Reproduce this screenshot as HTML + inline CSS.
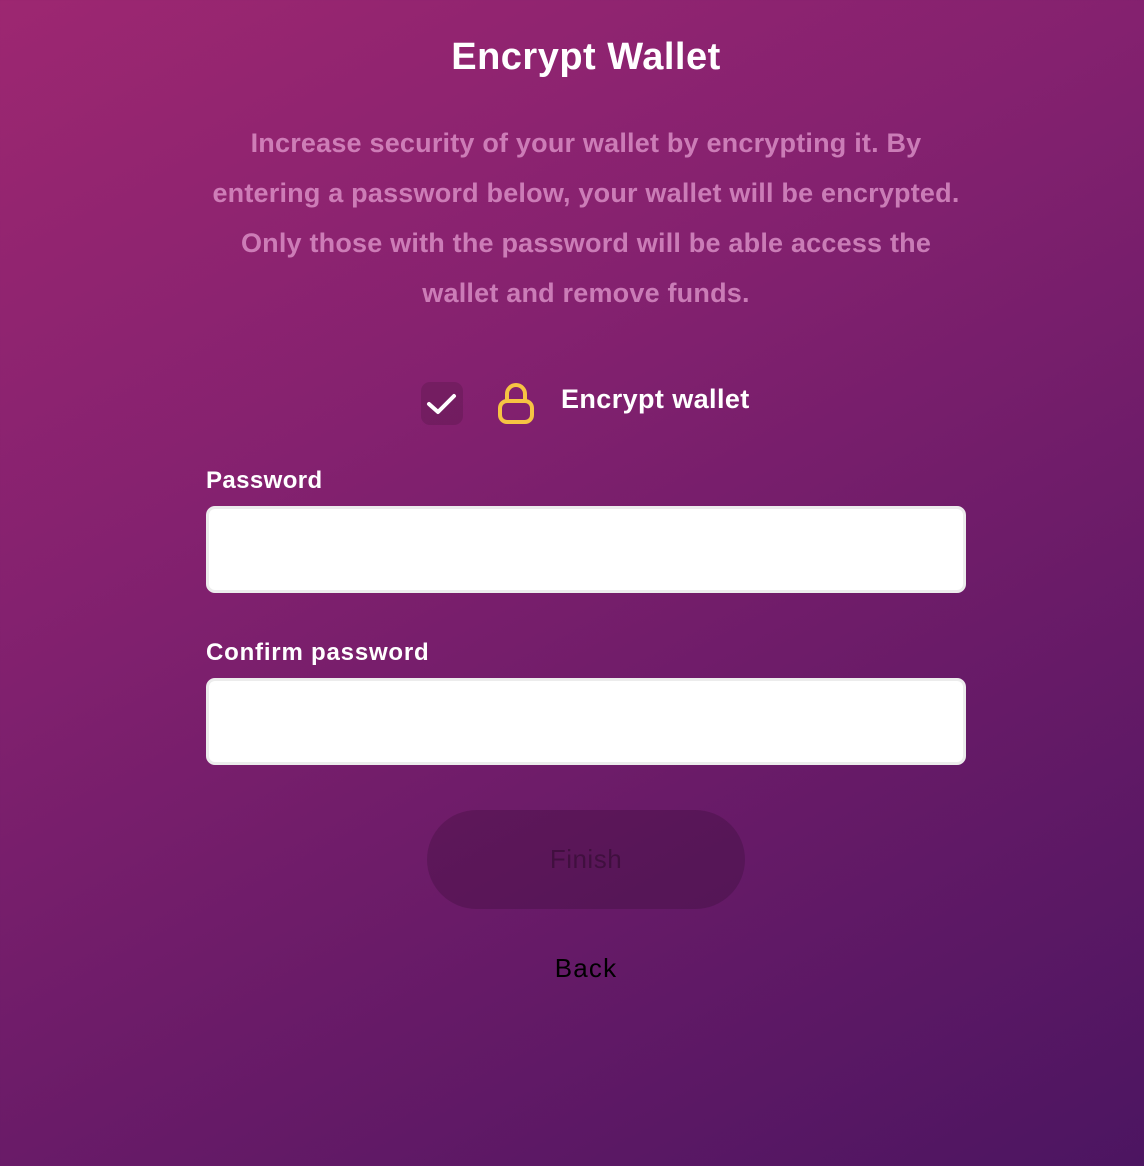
<!DOCTYPE html>
<html><head><meta charset="utf-8"><style>
html,body{margin:0;padding:0}
body{width:1144px;height:1166px;overflow:hidden;position:relative;
background:linear-gradient(152deg,#9d2771 0%,#84216f 35%,#6a1b68 65%,#4c1561 100%);
font-family:"Liberation Sans",sans-serif;}
.t{position:absolute;left:0;width:1144px;text-align:center;white-space:nowrap}
h1{position:absolute;left:0;width:1172px;text-align:center;margin:0;top:36px;font-size:38px;font-weight:bold;color:#fff;letter-spacing:0.5px}
.p{top:118px;font-size:27px;font-weight:bold;line-height:50px;color:rgba(230,160,210,0.72);left:0;width:1172px;letter-spacing:0.2px}
.lbl{position:absolute;left:206px;color:#fff;font-size:24px;font-weight:bold;letter-spacing:0.4px}
.in{position:absolute;left:206px;height:81px;background:#fff;border:3px solid #ececec;border-radius:9px;box-sizing:content-box;width:754px}
.btn{position:absolute;left:427px;top:810px;width:318px;height:99px;border-radius:50px;background:rgba(0,0,0,0.15);color:rgba(0,0,0,0.28);font-size:26px;text-align:center;line-height:99px;letter-spacing:0.5px}
</style></head><body>
<h1>Encrypt Wallet</h1>
<div class="t p">Increase security of your wallet by encrypting it. By<br>entering a password below, your wallet will be encrypted.<br>Only those with the password will be able access the<br>wallet and remove funds.</div>
<div style="position:absolute;left:421px;top:382px;width:42px;height:43px;border-radius:9px;background:rgba(0,0,0,0.12)"></div>
<svg style="position:absolute;left:421px;top:382px" width="42" height="43"><path d="M8 22 L17 30 L33 14" fill="none" stroke="#fff" stroke-width="4" stroke-linecap="round" stroke-linejoin="round"/></svg>
<svg style="position:absolute;left:497px;top:381px" width="38" height="44"><path d="M10 20 V13 a9 9 0 0 1 18 0 V20" fill="none" stroke="#f6c343" stroke-width="4"/><rect x="3" y="20" width="32" height="21" rx="7" fill="none" stroke="#f6c343" stroke-width="4"/></svg>
<div style="position:absolute;left:561px;top:384px;font-size:27px;font-weight:bold;color:#fff;letter-spacing:0.4px">Encrypt wallet</div>
<div class="lbl" style="top:467px">Password</div>
<div class="in" style="top:506px"></div>
<div class="lbl" style="top:639px;letter-spacing:0.8px">Confirm password</div>
<div class="in" style="top:678px"></div>
<div class="btn">Finish</div>
<div class="t" style="top:953px;left:0;width:1172px;font-size:26px;color:#000;letter-spacing:1.2px">Back</div>
</body></html>
